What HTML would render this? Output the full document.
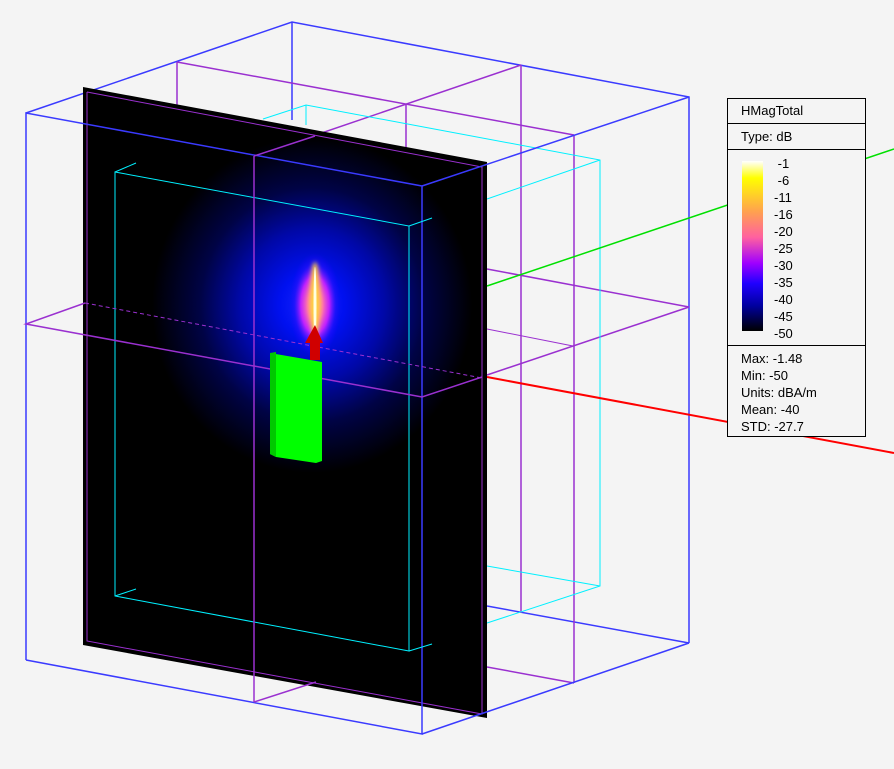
<!DOCTYPE html>
<html><head><meta charset="utf-8"><style>
html,body{margin:0;padding:0;background:#f4f4f4;width:894px;height:769px;overflow:hidden}
svg{position:absolute;left:0;top:0}
.lg{position:absolute;left:727px;top:98px;width:139px;height:339px;border:1px solid #000;background:#f4f4f4;font-family:"Liberation Sans",sans-serif;font-size:13px;color:#000;box-sizing:border-box}
.lg div{position:absolute}
</style></head><body>
<svg width="894" height="769" viewBox="0 0 894 769">
<defs>
<radialGradient id="bg" cx="312" cy="305" r="160" gradientUnits="userSpaceOnUse" gradientTransform="translate(312 305) scale(1 1.05) translate(-312 -305)">
<stop offset="0" stop-color="#1828ff"/>
<stop offset="0.2" stop-color="#0010f0"/>
<stop offset="0.45" stop-color="#0008a8"/>
<stop offset="0.7" stop-color="#000345"/>
<stop offset="1" stop-color="#000"/>
</radialGradient>
<radialGradient id="pk" cx="315" cy="305" r="40" gradientUnits="userSpaceOnUse" gradientTransform="translate(315 305) scale(0.65 1.3) translate(-315 -305)">
<stop offset="0" stop-color="#ffc060"/>
<stop offset="0.3" stop-color="#ff70b0"/>
<stop offset="0.55" stop-color="#c020ff"/>
<stop offset="0.8" stop-color="#3010ff" stop-opacity="0.5"/>
<stop offset="1" stop-color="#2000ff" stop-opacity="0"/>
</radialGradient>
<filter id="bl" x="-1" y="-1" width="3" height="3"><feGaussianBlur stdDeviation="2"/></filter>
</defs>
<g fill="none" stroke-width="1.5">
<polyline stroke="#3a3aff" points="26,113 292,22 689,97 689,643"/>
<line stroke="#3a3aff" x1="292" y1="22" x2="292" y2="120"/>
<line stroke="#3a3aff" x1="689" y1="643" x2="487" y2="606"/>
<polyline stroke="#9a30d0" points="177,62 177,110"/>
<line stroke="#9a30d0" x1="177" y1="62" x2="574" y2="135"/>
<line stroke="#9a30d0" x1="521" y1="65" x2="254" y2="156"/>
<line stroke="#9a30d0" x1="406" y1="104" x2="406" y2="150"/>
<line stroke="#9a30d0" x1="521" y1="65" x2="521" y2="613"/>
<line stroke="#9a30d0" x1="574" y1="135" x2="574" y2="683"/>
<line stroke="#9a30d0" x1="487" y1="667" x2="574" y2="683"/>
<line stroke="#9a30d0" x1="487" y1="269" x2="689" y2="307"/>
<line stroke="#9a30d0" x1="487" y1="375" x2="689" y2="307"/>
<line stroke="#9a30d0" stroke-width="1" x1="487" y1="329" x2="573" y2="346"/>
<g stroke="#00f0ff" stroke-width="1">
<polyline points="263,119 306,105 600,160 600,586 487,623"/>
<line x1="306" y1="105" x2="306" y2="125"/>
<line x1="600" y1="160" x2="487" y2="199"/>
<line x1="600" y1="586" x2="487" y2="566"/>
</g>
<line stroke="#00e000" x1="487" y1="286" x2="894" y2="149"/>
<line stroke="#ff0000" stroke-width="2" x1="487" y1="377" x2="894" y2="453"/>
</g>
<polygon points="83,87 487,162 487,718 83,645" fill="#000"/>
<polygon points="88,92 482,166 482,714 88,641" fill="url(#bg)"/>
<ellipse cx="315" cy="305" rx="32" ry="62" fill="url(#pk)"/>
<ellipse cx="315" cy="300" rx="5" ry="38" fill="#ffd040" filter="url(#bl)"/>
<ellipse cx="315" cy="305" rx="1.5" ry="38" fill="#ffffe0"/>
<g fill="none" stroke-width="1.5">
<polyline stroke="#9a30d0" stroke-width="1" points="87,92 482,167 482,714 87,641 87,92"/>
<polyline stroke="#3a3aff" points="26,660 26,113 422,186 422,734 26,660"/>
<line stroke="#3a3aff" x1="422" y1="186" x2="689" y2="97"/>
<line stroke="#3a3aff" x1="422" y1="734" x2="689" y2="643"/>
<g stroke="#00f0ff" stroke-width="1">
<polygon points="115,172 409,226 409,651 115,596"/>
<line x1="115" y1="172" x2="136" y2="163"/>
<line x1="409" y1="226" x2="432" y2="218"/>
<line x1="409" y1="651" x2="432" y2="644"/>
<line x1="115" y1="596" x2="136" y2="589"/>
</g>
<line stroke="#9a30d0" x1="254" y1="156" x2="254" y2="702"/>
<line stroke="#9a30d0" x1="254" y1="156" x2="315" y2="136"/>
<line stroke="#9a30d0" x1="254" y1="702" x2="316" y2="682"/>
<polyline stroke="#9a30d0" points="85,303 26,324 422,397 482,377"/>
<line stroke="#9a30d0" stroke-dasharray="4 3" stroke-width="1" x1="85" y1="303" x2="482" y2="378"/>
</g>
<polygon points="270,353 322,362 322,461 316,463 276,457 270,454" fill="#00ff00"/>
<polygon points="270,353 276,352 276,457 270,454" fill="#00c800"/>
<rect x="310" y="342" width="10" height="18" fill="#d00000"/>
<polygon points="305,343 323,343 315,325" fill="#d00000"/>
</svg>
<div class="lg">
<div style="left:13px;top:4px">HMagTotal</div>
<div style="left:0;top:24px;width:137px;border-top:1px solid #000"></div>
<div style="left:13px;top:30px">Type: dB</div>
<div style="left:0;top:50px;width:137px;border-top:1px solid #000"></div>
<div style="left:14px;top:62px;width:21px;height:170px;background:linear-gradient(#fff 0%,#ffff00 10%,#ffa050 30%,#ff60a0 45%,#a000ff 60%,#2000ff 72%,#0000a0 85%,#000 100%)"></div>
<div style="left:46px;top:56px;line-height:17px">&nbsp;-1<br>&nbsp;-6<br>-11<br>-16<br>-20<br>-25<br>-30<br>-35<br>-40<br>-45<br>-50</div>
<div style="left:0;top:246px;width:137px;border-top:1px solid #000"></div>
<div style="left:13px;top:251px;line-height:17px">Max: -1.48<br>Min: -50<br>Units: dBA/m<br>Mean: -40<br>STD: -27.7</div>
</div>
</body></html>
